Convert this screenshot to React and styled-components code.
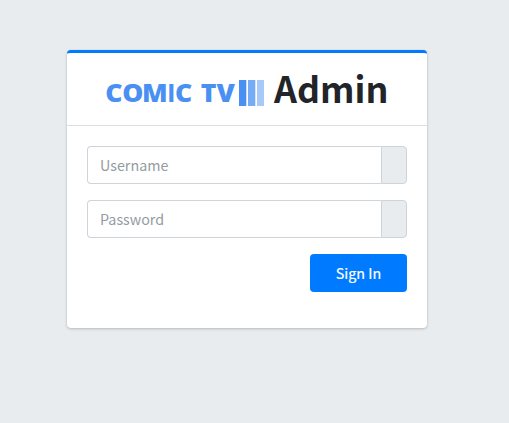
import React from "react";
import styled, { createGlobalStyle } from "styled-components";

const GlobalStyle = createGlobalStyle`
  *, *::before, *::after { box-sizing: border-box; }
  body {
    margin: 0;
    min-height: 100vh;
    background: #e9ecef;
    color: #212529;
    font-family: "Noto Sans CJK SC", "Noto Sans", sans-serif;
    font-size: 14.3px;
    line-height: 24px;
  }
`;

const Page = styled.main`
  display: flex;
  flex-direction: column;
  padding: 50px 82px 0 67px;
`;

const Card = styled.section`
  width: 360px;
  height: 278px;
  background: #fff;
  border-top: 3px solid #007bff;
  border-radius: 4px;
  box-shadow: 0 0 1px rgba(0, 0, 0, 0.125), 0 1px 3px rgba(0, 0, 0, 0.2);
`;

const CardHeader = styled.header`
  display: flex;
  align-items: center;
  height: 73px;
  padding-left: 38px;
  border-bottom: 1px solid rgba(0, 0, 0, 0.125);
`;

const Logo = styled.svg`
  width: 162px;
  height: 30px;
  margin-top: 7px;
  flex: none;
  overflow: visible;
`;

const Wordmark = styled.text`
  font-family: "Open Sans", sans-serif;
  font-size: 25.5px;
  font-weight: 800;
  fill: #4a90f2;
`;

const PlainLetter = styled.tspan`
  font-family: Lato, sans-serif;
  font-weight: 900;
`;

const Title = styled.h1`
  margin: 0 0 5px 7px;
  font-size: 35.8px;
  font-weight: 700;
  line-height: 48px;
`;

const Form = styled.form`
  display: flex;
  flex-direction: column;
  gap: 16px;
  padding: 20px;
`;

const InputGroup = styled.div`
  display: flex;
  height: 38px;
`;

const Input = styled.input`
  flex: 1;
  min-width: 0;
  padding: 6px 12px;
  border: 1px solid #ced4da;
  border-right: 0;
  border-radius: 4px 0 0 4px;
  background: #fff;
  color: #495057;
  font: inherit;
  outline: 0;
  &::placeholder { color: #939ba2; opacity: 1; }
`;

const Addon = styled.span`
  width: 26px;
  border: 1px solid #ced4da;
  border-radius: 0 4px 4px 0;
  background: #e9ecef;
`;

const SubmitButton = styled.button`
  align-self: flex-end;
  width: 97px;
  height: 38px;
  padding: 0;
  border: 0;
  border-radius: 4px;
  background: #007bff;
  color: #fff;
  font: inherit;
  -webkit-text-stroke: 0.2px #fff;
`;

function Field({ label, type }) {
  return (
    <InputGroup>
      <Input type={type} placeholder={label} aria-label={label} />
      <Addon />
    </InputGroup>
  );
}

export default function App() {
  return (
    <Page>
      <GlobalStyle />
      <Card>
        <CardHeader>
          <Logo viewBox="0 0 162 30" role="img" aria-label="Comic TV">
            <Wordmark x="0.3 16.5 35.6 59.8 67.3 85 92 107.2" y="24" transform="scale(1.04 1)">
              COM<PlainLetter>I</PlainLetter>C TV
            </Wordmark>
            <rect x="134" y="2" width="7.3" height="26" fill="#4a90f2" />
            <rect x="143" y="2" width="7.3" height="26" fill="#76abf5" />
            <rect x="152" y="2" width="7" height="26" fill="#a6c9f9" />
          </Logo>
          <Title>Admin</Title>
        </CardHeader>
        <Form onSubmit={(event) => event.preventDefault()}>
          <Field label="Username" type="text" />
          <Field label="Password" type="password" />
          <SubmitButton type="submit">Sign In</SubmitButton>
        </Form>
      </Card>
    </Page>
  );
}
